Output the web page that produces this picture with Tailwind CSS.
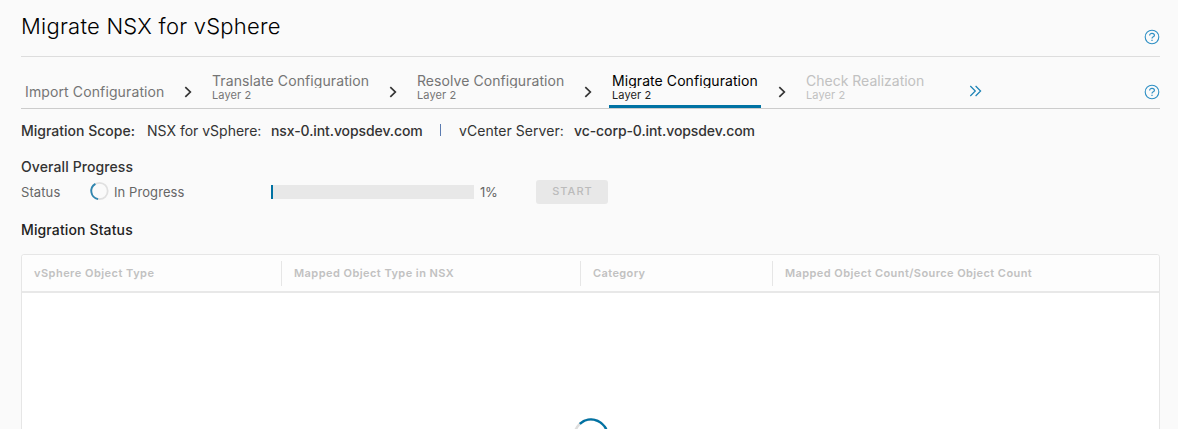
<!DOCTYPE html>
<html lang="en">
<head>
<meta charset="utf-8">
<title>Migrate NSX for vSphere</title>
<script src="https://cdn.jsdelivr.net/npm/@tailwindcss/browser@4"></script>
</head>
<body class="bg-[#fafafa] overflow-hidden h-[429px] font-['Inter','Liberation_Sans',sans-serif] text-sm text-[#333] whitespace-nowrap">
<main class="ml-[21px] h-[429px] w-[1139px] overflow-hidden">
  <header class="flex h-[57px] justify-between border-b border-[#ddd]">
    <h1 class="mt-[10px] text-[22px] leading-8 font-light tracking-[0.24px] text-black">Migrate NSX for vSphere</h1>
    <svg class="mt-[29px] size-4" viewBox="0 0 16 16" fill="none" stroke="#2e8fc4"><circle cx="8" cy="8" r="6.8" stroke-width="1.1"/><path stroke-width="1.2" d="M5.6 6.5C5.6 3.6 10.4 3.8 10.4 6.4C10.4 7.9 8 7.8 8 9.5M8 10.8v1.3"/></svg>
  </header>
  <nav class="flex h-[52px] border-b border-[#ccc] text-[#757575]">
    <div class="ml-1 mt-[25px] w-[159px] leading-5 tracking-[0.12px]">Import Configuration</div>
    <svg class="mt-[29px] h-3 w-2 shrink-0" viewBox="0 0 8 12" fill="none" stroke="#333" stroke-width="1.7"><path d="M1.3 1.2L6.3 6L1.3 10.8"/></svg>
    <div class="ml-5 mt-[15px] w-[177px]"><div class="h-4 overflow-hidden leading-[18px] tracking-[0.1px]">Translate Configuration</div><div class="text-[11px] leading-[14px] tracking-[0.1px]">Layer 2</div></div>
    <svg class="mt-[29px] h-3 w-2 shrink-0" viewBox="0 0 8 12" fill="none" stroke="#333" stroke-width="1.7"><path d="M1.3 1.2L6.3 6L1.3 10.8"/></svg>
    <div class="ml-5 mt-[15px] w-[167px]"><div class="h-4 overflow-hidden leading-[18px] tracking-[0.06px]">Resolve Configuration</div><div class="text-[11px] leading-[14px] tracking-[0.1px]">Layer 2</div></div>
    <svg class="mt-[29px] h-3 w-2 shrink-0" viewBox="0 0 8 12" fill="none" stroke="#333" stroke-width="1.7"><path d="M1.3 1.2L6.3 6L1.3 10.8"/></svg>
    <div class="ml-[17px] w-[152px] border-b-3 border-[#0072a3] pl-[3px] pt-[15px] text-black"><div class="h-4 overflow-hidden leading-[18px] tracking-[0.07px]">Migrate Configuration</div><div class="text-[11px] leading-[14px] tracking-[0.1px] text-[#222]">Layer 2</div></div>
    <svg class="ml-[17px] mt-[29px] h-3 w-2 shrink-0" viewBox="0 0 8 12" fill="none" stroke="#333" stroke-width="1.7"><path d="M1.3 1.2L6.3 6L1.3 10.8"/></svg>
    <div class="ml-5 mt-[15px] w-[163px] text-[#c1c1c1]"><div class="h-4 overflow-hidden leading-[18px]">Check Realization</div><div class="text-[11px] leading-[14px] tracking-[0.1px]">Layer 2</div></div>
    <svg class="mt-7 h-3 w-[13px]" viewBox="0 0 13 12" fill="none" stroke="#1a82b5" stroke-width="1.2"><path d="M1.3 1L6.3 6L1.3 11M6.6 1L11.6 6L6.6 11"/></svg>
    <svg class="ml-auto mt-[27px] size-4" viewBox="0 0 16 16" fill="none" stroke="#2e8fc4"><circle cx="8" cy="8" r="6.8" stroke-width="1.1"/><path stroke-width="1.2" d="M5.6 6.5C5.6 3.6 10.4 3.8 10.4 6.4C10.4 7.9 8 7.8 8 9.5M8 10.8v1.3"/></svg>
  </nav>
  <section class="mt-3 flex h-5 leading-5">
    <div class="w-[126px] font-medium">Migration Scope:</div>
    <div class="w-[124px]">NSX for vSphere:</div>
    <div class="w-[169px] font-medium tracking-[-0.09px]">nsx-0.int.vopsdev.com</div>
    <div class="mt-[3px] h-3 w-px bg-[#5b7bb0]"></div>
    <div class="ml-[18px] w-[115px] tracking-[0.05px]">vCenter Server:</div>
    <div class="font-medium tracking-[-0.09px]">vc-corp-0.int.vopsdev.com</div>
  </section>
  <h2 class="mt-4 leading-5 font-[450] tracking-[0.1px]">Overall Progress</h2>
  <section class="mt-[3px] flex h-6 items-center text-[13px] text-[#666]">
    <div class="w-[68px] tracking-[0.1px]">Status</div>
    <svg class="-mt-0.5 h-5 w-5" viewBox="0 0 20 20" fill="none" stroke-width="1.8"><circle cx="10.5" cy="10" r="8.2" stroke="#e0e0e0"/><path d="M6.4 2.9A8.2 8.2 0 0 0 9.1 18.1" stroke="#2f86b0"/></svg>
    <div class="ml-[5px] w-[157px] tracking-[0.08px]">In Progress</div>
    <div class="h-3.5 w-[203px] border-l-2 border-[#0072a3] bg-[#e8e8e8]"></div>
    <div class="ml-1.5 w-14 tracking-[-0.4px]">1%</div>
    <button class="h-6 w-[72px] rounded-[3px] bg-[#e8e8e8] pl-px text-[11px] font-medium tracking-[1px] text-[#bbb]">START</button>
  </section>
  <h2 class="mt-4 leading-5 font-medium tracking-[0.13px] text-[#222]">Migration Status</h2>
  <section class="mt-3.5 h-[200px] rounded-[3px] border border-[#e6e6e6] bg-white">
    <div class="flex h-[38px] items-center rounded-t-[3px] border-b-2 border-[#e8e8e8] bg-[#fdfdfd] text-[11px] font-semibold text-[#c1c1c1]">
      <div class="w-[259px] pl-3 pt-0.5 tracking-[0.48px]">vSphere Object Type</div>
      <div class="flex h-[25px] w-[299px] items-center border-l border-[#e6e6e6] pl-3 pt-0.5 tracking-[0.45px]">Mapped Object Type in NSX</div>
      <div class="flex h-[25px] w-[192px] items-center border-l border-[#e6e6e6] pl-3 pt-0.5 tracking-[0.4px]">Category</div>
      <div class="flex h-[25px] items-center border-l border-[#e6e6e6] pl-3 pt-0.5 tracking-[0.42px]">Mapped Object Count/Source Object Count</div>
    </div>
    <div class="flex h-[161px] justify-center overflow-hidden pt-[125px]">
      <svg class="size-9 shrink-0" viewBox="0 0 36 36" fill="none" stroke-width="2.6"><circle cx="18" cy="18" r="16.5" stroke="#ddd"/><path d="M6.8 5.9A16.5 16.5 0 0 1 34.5 18" stroke="#0072a3"/></svg>
    </div>
  </section>
</main>
</body>
</html>
